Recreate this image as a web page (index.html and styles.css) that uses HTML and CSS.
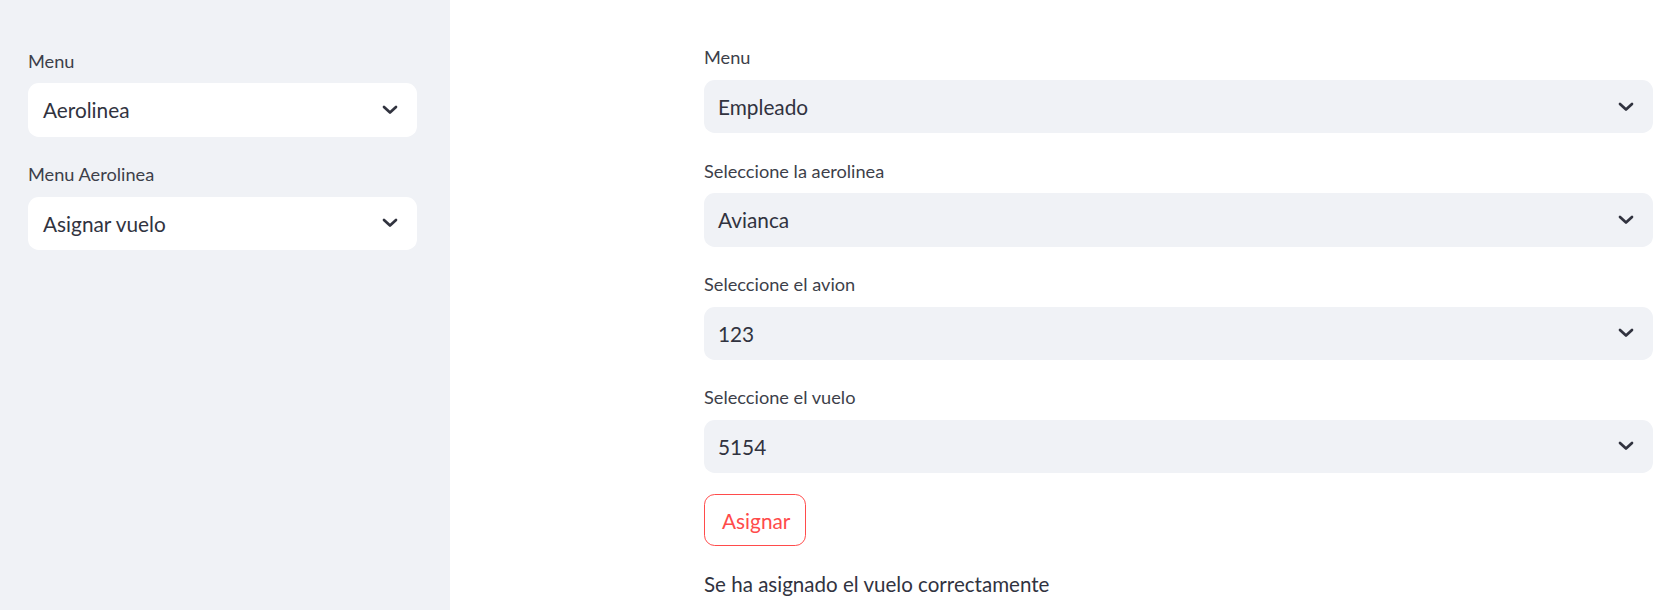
FILE: index.html
```html
<!DOCTYPE html>
<html lang="es">
<head>
<meta charset="utf-8">
<title>Aerolinea</title>
<link rel="stylesheet" href="styles.css">
</head>
<body>
<aside class="sidebar">
  <div class="field">
    <label class="label">Menu</label>
    <div class="select select-white"><span class="value">Aerolinea</span>
      <svg class="chev" viewBox="0 0 16 10"><path d="M2 2 L8 7.6 L14 2"/></svg></div>
  </div>
  <div class="field">
    <label class="label">Menu Aerolinea</label>
    <div class="select select-white"><span class="value">Asignar vuelo</span>
      <svg class="chev" viewBox="0 0 16 10"><path d="M2 2 L8 7.6 L14 2"/></svg></div>
  </div>
</aside>
<main class="main">
  <div class="content">
    <div class="field">
      <label class="label">Menu</label>
      <div class="select"><span class="value">Empleado</span>
        <svg class="chev" viewBox="0 0 16 10"><path d="M2 2 L8 7.6 L14 2"/></svg></div>
    </div>
    <div class="field">
      <label class="label">Seleccione la aerolinea</label>
      <div class="select"><span class="value">Avianca</span>
        <svg class="chev" viewBox="0 0 16 10"><path d="M2 2 L8 7.6 L14 2"/></svg></div>
    </div>
    <div class="field">
      <label class="label">Seleccione el avion</label>
      <div class="select"><span class="value">123</span>
        <svg class="chev" viewBox="0 0 16 10"><path d="M2 2 L8 7.6 L14 2"/></svg></div>
    </div>
    <div class="field">
      <label class="label">Seleccione el vuelo</label>
      <div class="select"><span class="value">5154</span>
        <svg class="chev" viewBox="0 0 16 10"><path d="M2 2 L8 7.6 L14 2"/></svg></div>
    </div>
    <div class="field">
      <button class="btn" type="button">Asignar</button>
    </div>
    <p class="msg">Se ha asignado el vuelo correctamente</p>
  </div>
</main>
</body>
</html>
```
FILE: styles.css
```css
* { box-sizing: border-box; }
html, body { margin: 0; padding: 0; height: 100%; }
body {
  display: flex;
  font-family: "Lato", "Noto Sans", sans-serif;
  color: #31333f;
  background: #ffffff;
  overflow: hidden;
}
.sidebar {
  width: 450px;
  flex: 0 0 450px;
  background: #f0f2f6;
  padding: 44.6px 33px 0 28px;
  min-height: 610px;
}
.main {
  flex: 1;
  padding: 41.3px 25px 0 254px;
}
.content {
  display: flex;
  flex-direction: column;
  gap: 21.3px;
}
.sidebar .field + .field { margin-top: 21.3px; }
.label {
  display: block;
  height: 38.7px;
  padding-top: 4px;
  font-size: 18.2px;
  line-height: 24px;
  color: #3d3f4a;
}
.select {
  height: 53.3px;
  border-radius: 10.7px;
  background: #f0f2f6;
  display: flex;
  align-items: center;
  justify-content: space-between;
  padding: 0 19px 0 14px;
}
.select-white { background: #ffffff; padding-left: 15px; }
.value { font-size: 20.8px; color: #31333f; }
.chev {
  width: 16px;
  height: 10px;
  fill: none;
  stroke: #31333f;
  stroke-width: 2.7;
  stroke-linecap: round;
  stroke-linejoin: round;
}
.btn {
  height: 51.7px;
  padding: 0 17px;
  border: 1px solid #ff4b4b;
  border-radius: 10.7px;
  background: #ffffff;
  color: #ff4b4b;
  font-family: inherit;
  font-size: 20.8px;
  width: 102px;
}
.msg {
  margin: 0;
  font-size: 20.55px;
  line-height: 34px;
  color: #31333f;
}
```
